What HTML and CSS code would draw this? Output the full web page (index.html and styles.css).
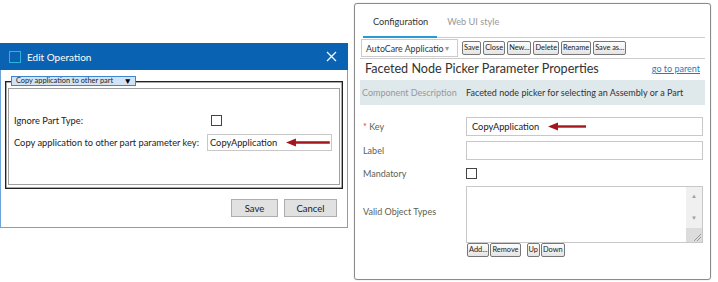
FILE: index.html
```html
<!DOCTYPE html>
<html>
<head>
  <meta charset="utf-8"/>
  <title>Edit Operation</title>
  <link rel="stylesheet" href="styles.css">
</head>
<body>

<div class="page">

  <div class="dialog">
    <div class="titlebar">
      <span class="app-icon"></span>
      <span class="title">Edit Operation</span>
      <svg class="close" width="11" height="11" viewBox="0 0 11 11">
        <path d="M1 1L10 10M10 1L1 10" stroke="#fff" stroke-width="1.2" fill="none"/>
      </svg>
    </div>
    <div class="dialog-body">
      <fieldset class="group">
        <legend class="group-select">Copy application to other part <span class="caret">&#9660;</span></legend>
        <div class="group-inner">
          <label>Ignore Part Type:</label>
          <span class="check check-left"></span>
          <label>Copy application to other part parameter key:</label>
          <div class="field field-left">
            CopyApplication
            <svg class="arrow" width="45" height="9" viewBox="0 0 45 9">
              <path d="M8 4.5H44" stroke="#a3161c" stroke-width="2.4"/>
              <path d="M0 4.5L10 0.5V8.5Z" fill="#a3161c"/>
            </svg>
          </div>
        </div>
      </fieldset>
      <div class="dialog-buttons">
        <button class="win-btn save">Save</button>
        <button class="win-btn">Cancel</button>
      </div>
    </div>
  </div>

  <div class="panel">
    <div class="tabs">
      <span class="tab active">Configuration</span>
      <span class="tab">Web UI style</span>
    </div>
    <div class="toolbar">
      <div class="combo"><span class="combo-text">AutoCare Applicatio</span><span class="combo-caret">&#9662;</span></div>
      <button class="mini">Save</button>
      <button class="mini">Close</button>
      <button class="mini">New...</button>
      <button class="mini">Delete</button>
      <button class="mini">Rename</button>
      <button class="mini">Save as...</button>
    </div>
    <div class="heading">
      <h1>Faceted Node Picker Parameter Properties</h1>
      <a href="#">go to parent</a>
    </div>
    <div class="desc">
      <span class="desc-label">Component Description</span>
      <span>Faceted node picker for selecting an Assembly or a Part</span>
    </div>

    <div class="prop-row key-row">
      <label><span class="req">*</span> Key</label>
      <div class="field field-right">
        CopyApplication
        <svg class="arrow" width="39" height="9" viewBox="0 0 39 9">
          <path d="M8 4.5H38" stroke="#a3161c" stroke-width="2.4"/>
          <path d="M0 4.5L10 0.5V8.5Z" fill="#a3161c"/>
        </svg>
      </div>
    </div>
    <div class="prop-row label-row">
      <label>Label</label>
      <div class="field field-right"></div>
    </div>
    <div class="prop-row mandatory-row">
      <label>Mandatory</label>
      <span class="check"></span>
    </div>
    <div class="prop-row types-row">
      <label>Valid Object Types</label>
      <div class="listbox">
        <div class="scrollbar">
          <span class="up">&#9650;</span>
          <span class="down">&#9660;</span>
          <span class="grip">
            <svg width="10" height="10" viewBox="0 0 10 10">
              <path d="M2 9L9 2M5 9L9 5" stroke="#888" stroke-width="0.8"/>
            </svg>
          </span>
        </div>
      </div>
    </div>
    <div class="list-buttons">
      <button class="mini">Add...</button>
      <button class="mini">Remove</button>
      <button class="mini gap">Up</button>
      <button class="mini">Down</button>
    </div>
  </div>

</div>

</body>
</html>
```

FILE: styles.css
```css
body {
  margin: 0;
  background-color: #fff;
  font-family: Lato, "Open Sans", sans-serif;
  color: #222;
}
.page {
  display: flex;
  align-items: flex-start;
  width: 718px;
  height: 282px;
}

/* left: windows dialog */
.dialog {
  width: 348px;
  margin-top: 43px;
}
.titlebar {
  height: 27px;
  background-color: #0a62b2;
  display: flex;
  align-items: center;
  padding: 0 10px 0 9px;
}
.app-icon {
  width: 10px;
  height: 10px;
  border: 1px solid #28b4dc;
}
.title {
  color: #fff;
  font-size: 10px;
  margin-left: 6px;
  flex: 1;
}
.close {
  margin-right: 1px;
}
.dialog-body {
  border: 1px solid #6ea5d8;
  border-top: none;
  height: 151px;
  padding-top: 6px;
}
.group {
  margin: 0 4px 0 4px;
  padding: 0 2px 3px 2px;
  border: 1px solid #222;
  box-shadow: inset 0 0 0 0.5px #555;
}
.group-select {
  margin-left: 3px;
  padding: 0 0 0 4px;
  width: 119px;
  height: 8px;
  background-color: #d3e3f6;
  border: 1px solid #3f86d0;
  font-size: 7.4px;
  line-height: 8px;
  color: #222;
  display: flex;
  justify-content: space-between;
  box-sizing: content-box;
}
.caret {
  font-size: 8.5px;
  line-height: 8px;
  color: #000;
  margin-right: 3px;
}
.group-inner {
  margin-top: 2px;
  height: 74px;
  border: 1px solid #a0a0a0;
  padding: 21px 0 0 5px;
  display: grid;
  grid-template-columns: 193px auto;
  grid-auto-rows: 20px;
  row-gap: 2px;
  align-items: center;
  font-size: 9.3px;
}
.check {
  width: 9px;
  height: 9px;
  border: 1px solid #444;
  background-color: #fff;
}
.check-left {
  margin-left: 4px;
}
.field {
  height: 17px;
  border: 1px solid #c8c8c8;
  display: flex;
  align-items: center;
  font-size: 9.3px;
  color: #222;
  box-sizing: border-box;
}
.field-left {
  width: 125px;
  padding-left: 2px;
}
.field-left .arrow {
  margin-left: 9px;
}
.dialog-buttons {
  display: flex;
  justify-content: flex-end;
  gap: 6px;
  margin-top: 10px;
  padding-right: 10px;
}
.win-btn {
  height: 18px;
  width: 53px;
  padding: 0;
  border: 1px solid #adadad;
  background-color: #e1e1e1;
  font-family: inherit;
  font-size: 9.5px;
  color: #222;
}
.win-btn.save {
  width: 47px;
}

/* right: configuration panel */
.panel {
  width: 345px;
  height: 275px;
  margin: 3px 0 0 6px;
  border: 1px solid #8a8a8a;
  border-radius: 3px;
  padding: 0 5px;
  box-shadow: 0 0 1px #999;
}
.tabs {
  display: flex;
  margin-left: 3px;
  height: 33px;
  border-bottom: 1px solid #ccc;
}
.tab {
  font-size: 9.2px;
  color: #999;
  padding: 11px 9px 0 10px;
  line-height: 14px;
}
.tab.active {
  color: #333;
  border-bottom: 2px solid #2a9ad6;
  margin-bottom: -1px;
}
.toolbar {
  display: flex;
  align-items: center;
  margin-top: 1px;
  padding-bottom: 1px;
  border-bottom: 1px solid #ccc;
}
.combo {
  width: 95px;
  height: 16px;
  border: 1px solid #ccc;
  margin-left: 1px;
  margin-right: 4px;
  display: flex;
  align-items: center;
  font-size: 8.8px;
  color: #333;
}
.combo-text {
  padding-left: 4px;
  white-space: nowrap;
}
.combo-caret {
  color: #999;
  font-size: 8px;
  margin-left: 1px;
}
.mini {
  height: 14px;
  padding: 0 1px;
  margin-right: 2px;
  border: 1px solid #777;
  border-radius: 2px;
  background: linear-gradient(#fdfdfd, #e4e4e4);
  font-family: inherit;
  font-size: 7.4px;
  line-height: 12px;
  color: #222;
}
.heading {
  display: flex;
  align-items: center;
  justify-content: space-between;
  height: 19px;
  padding: 0 5px 0 5px;
}
.heading h1 {
  margin: 0;
  font-size: 12.6px;
  font-weight: normal;
  color: #333;
}
.heading a {
  font-size: 9px;
  color: #2a7ac0;
}
.desc {
  margin-top: 2px;
  height: 25px;
  background-color: #dfe8eb;
  display: flex;
  align-items: center;
  padding-left: 2px;
  font-size: 9px;
  color: #333;
}
.desc-label {
  width: 104px;
  color: #999;
}
.prop-row {
  display: flex;
  align-items: center;
  padding-left: 3px;
}
.prop-row label {
  width: 103px;
  font-size: 9px;
  color: #5c6153;
}
.req {
  color: #d33;
}
.field-right {
  width: 237px;
  height: 19px;
  padding-left: 5px;
}
.field-right .arrow {
  margin-left: 9px;
}
.key-row {
  margin-top: 12px;
}
.label-row {
  margin-top: 5px;
}
.mandatory-row {
  margin-top: 5px;
  height: 16px;
}
.types-row {
  margin-top: 5px;
}
.types-row label {
  padding-bottom: 6px;
}
.listbox {
  width: 237px;
  height: 57px;
  border: 1px solid #c8c8c8;
  box-sizing: border-box;
  display: flex;
  justify-content: flex-end;
}
.scrollbar {
  width: 16px;
  background-color: #f0f0f0;
  display: flex;
  flex-direction: column;
  align-items: center;
  font-size: 6px;
  color: #a0a0a0;
}
.scrollbar .up {
  margin-top: 5px;
}
.scrollbar .down {
  margin-top: 15px;
}
.scrollbar .grip {
  margin-top: auto;
  width: 16px;
  height: 14px;
  background-color: #dcdcdc;
  display: flex;
  align-items: flex-end;
  justify-content: flex-end;
}
.list-buttons {
  display: flex;
  margin-left: 107px;
}
.list-buttons .mini {
  margin-right: 1px;
}
.list-buttons .mini.gap {
  margin-left: 5px;
}
```
